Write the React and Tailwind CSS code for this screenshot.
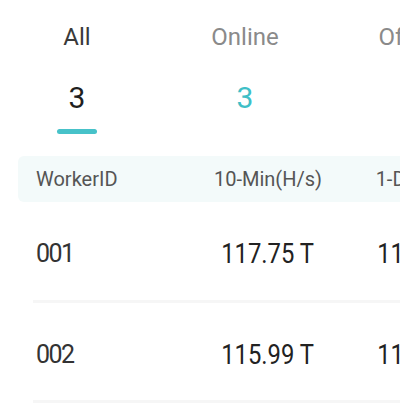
export default function App() {
  const tabs = [
    { label: "All", count: "3", active: true },
    { label: "Online", count: "3", teal: true },
    { label: "Offline", count: "0" },
  ];
  const rows = [
    { id: "001", m10: "117.75 T", d1: "116.82 T" },
    { id: "002", m10: "115.99 T", d1: "114.37 T" },
  ];
  return (
    <div
      className="w-[400px] h-[416px] overflow-hidden bg-white"
      style={{ fontFamily: "Roboto, 'Noto Sans', sans-serif" }}
    >
      <div className="flex gap-[14px] pt-[21px]">
        {tabs.map((t) => (
          <div key={t.label} className="w-[154px] shrink-0 flex flex-col items-center">
            <div
              className={`text-[24px] leading-[32px] whitespace-nowrap ${
                t.active ? "text-[#3a3a3a]" : "text-[#8a8a8a]"
              }`}
            >
              {t.label}
            </div>
            <div
              className={`mt-[27px] text-[30px] leading-[36px] ${
                t.teal ? "text-[#3fbfc7]" : "text-[#1f1f1f]"
              }`}
            >
              {t.count}
            </div>
            <div
              className={`mt-[13px] h-[5px] w-[40px] rounded-full ${
                t.active ? "bg-[#47c2c9]" : "bg-transparent"
              }`}
            />
          </div>
        ))}
      </div>

      <div className="mt-[22px] ml-[18px] h-[46px] rounded-l-md bg-[#f3fafa] flex items-center">
        <div className="grid grid-cols-[154px_156px_156px] pl-[18px] text-[20px] text-[#555555] whitespace-nowrap">
          <div>WorkerID</div>
          <div className="text-center">10-Min(H/s)</div>
          <div className="text-center">1-Day(H/s)</div>
        </div>
      </div>

      {rows.map((r, i) => (
        <div key={r.id}>
          <div
            className={`${i === 0 ? "h-[98px]" : "h-[97px]"} pt-[6px] flex items-center`}
          >
            <div className="grid grid-cols-[154px_156px_156px] pl-[36px] items-center whitespace-nowrap">
              <div className="text-[25px] tracking-[-1.5px] text-[#333333]">{r.id}</div>
              <div className="flex justify-center">
                <span className="inline-block text-[28px] text-[#222222] scale-x-[0.85]">
                  {r.m10}
                </span>
              </div>
              <div className="flex justify-center">
                <span className="inline-block text-[28px] text-[#222222] scale-x-[0.85]">
                  {r.d1}
                </span>
              </div>
            </div>
          </div>
          <div className="ml-[33px] h-[3px] bg-[#f6f6f6]" />
        </div>
      ))}
    </div>
  );
}
